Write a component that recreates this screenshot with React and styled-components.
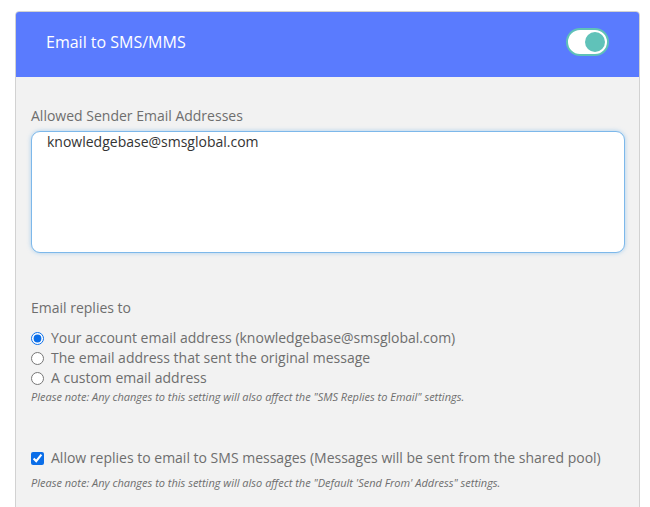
import React from "react"
import styled, { createGlobalStyle } from "styled-components"

const GlobalStyle = createGlobalStyle`
  body {
    margin: 0;
    background: #ffffff;
    font-family: "Open Sans", "Liberation Sans", sans-serif;
  }
`

const App = () => {
  return (
    <Page>
      <GlobalStyle />
      <Card>
        <Header>
          <Title>Email to SMS/MMS</Title>
          <Toggle aria-label="enabled">
            <Knob />
          </Toggle>
        </Header>
        <Body>
          <Label>Allowed Sender Email Addresses</Label>
          <TextArea
            defaultValue="knowledgebase@smsglobal.com"
            spellCheck={false}
          />
          <Section>
            <Label>Email replies to</Label>
            <OptionList>
              <Option>
                <Radio type="radio" name="reply" defaultChecked />
                Your account email address (knowledgebase@smsglobal.com)
              </Option>
              <Option>
                <Radio type="radio" name="reply" />
                The email address that sent the original message
              </Option>
              <Option>
                <Radio type="radio" name="reply" />
                A custom email address
              </Option>
            </OptionList>
            <Note>
              Please note: Any changes to this setting will also affect the "SMS
              Replies to Email" settings.
            </Note>
          </Section>
          <Section $gap={42}>
            <Option>
              <Check type="checkbox" defaultChecked />
              Allow replies to email to SMS messages (Messages will be sent from
              the shared pool)
            </Option>
            <Note $space={6}>
              Please note: Any changes to this setting will also affect the
              "Default 'Send From' Address" settings.
            </Note>
          </Section>
        </Body>
      </Card>
    </Page>
  )
}

export default App

const Page = styled.div`
  padding: 11px 10px 0 15px;
  height: 507px;
  box-sizing: border-box;
  overflow: hidden;
`

const Card = styled.div`
  width: 625px;
  border: 1px solid #d2d2d2;
  border-radius: 4px;
  background: #f2f2f2;
  box-sizing: border-box;
  overflow: hidden;
  min-height: 520px;
`

const Header = styled.div`
  height: 65px;
  box-sizing: border-box;
  background: #5a7bfe;
  display: flex;
  align-items: center;
  justify-content: space-between;
  padding: 0 30px 5px 30px;
`

const Title = styled.div`
  color: #ffffff;
  font-size: 16px;
`

const Toggle = styled.div`
  width: 43px;
  height: 28px;
  box-sizing: border-box;
  border: 2px solid #5fc1b8;
  border-radius: 14px;
  background: #ffffff;
  display: flex;
  align-items: center;
  justify-content: flex-end;
  padding-right: 2px;
`

const Knob = styled.div`
  width: 20px;
  height: 20px;
  border-radius: 50%;
  background: #60c2b9;
`

const Body = styled.div`
  padding: 29px 14px 0 15px;
  display: flex;
  flex-direction: column;
`

const Label = styled.div`
  color: #6e6e6e;
  font-size: 14px;
  line-height: 20px;
  margin-bottom: 5px;
`

const TextArea = styled.textarea`
  height: 122px;
  box-sizing: border-box;
  border: 1px solid #7db8ea;
  border-radius: 9px;
  box-shadow: 0 0 4px rgba(102, 175, 233, 0.55);
  background: #ffffff;
  padding: 0 15px;
  font-family: "Open Sans", "Liberation Sans", sans-serif;
  font-size: 14px;
  line-height: 20px;
  color: #333333;
  resize: none;
  outline: none;
`

const Section = styled.div`
  margin-top: ${(p) => p.$gap || 45}px;
  display: flex;
  flex-direction: column;
`

const OptionList = styled.div`
  display: flex;
  flex-direction: column;
  margin-top: 5px;
`

const Option = styled.label`
  display: flex;
  align-items: center;
  gap: 7px;
  color: #6e6e6e;
  font-size: 14px;
  line-height: 20px;
`

const Radio = styled.input`
  margin: 0;
  width: 13px;
  height: 13px;
  accent-color: #0b6ee8;
`

const Check = styled.input`
  margin: 0;
  width: 13px;
  height: 13px;
  accent-color: #0b6ee8;
`

const Note = styled.div`
  color: #6e6e6e;
  font-size: 11px;
  font-style: italic;
  line-height: 18px;
  margin-top: ${(p) => p.$space || 0}px;
`
